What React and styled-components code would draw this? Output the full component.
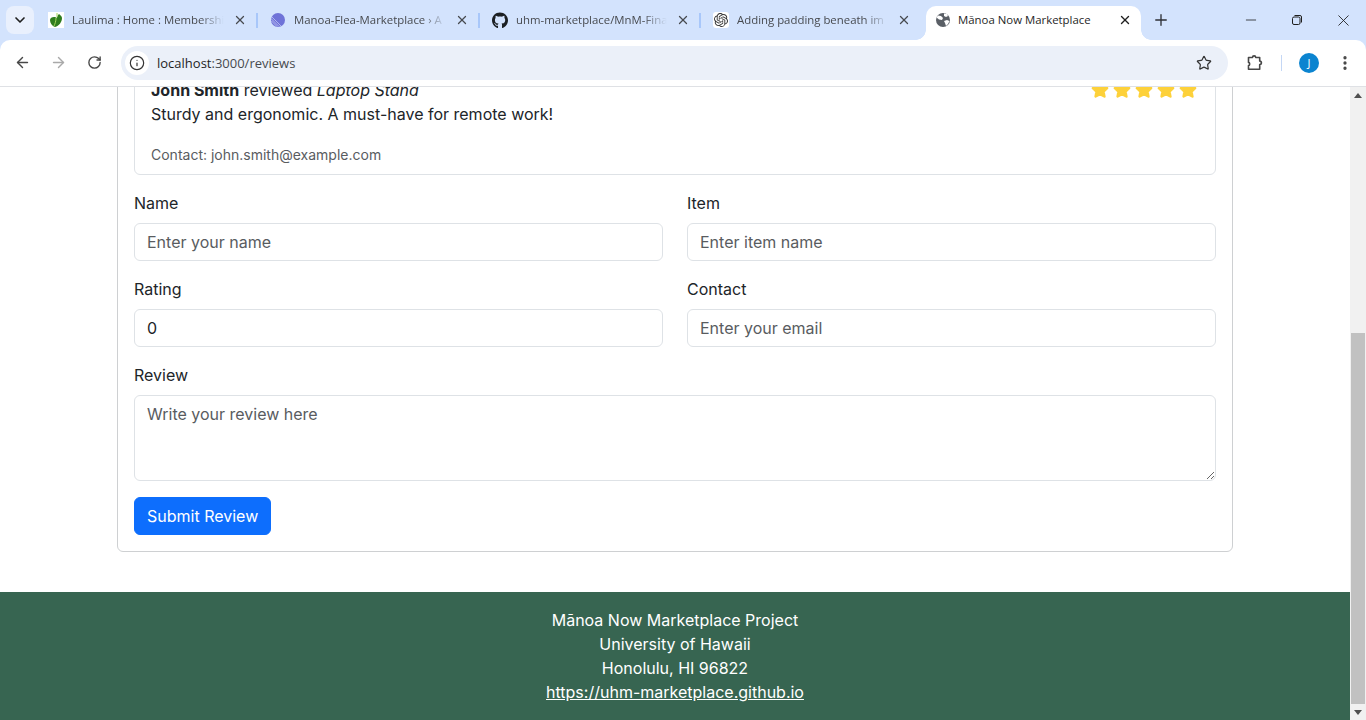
import React from "react"
import styled, { createGlobalStyle } from "styled-components"
import { ArrowLeft, ArrowRight, RotateCw, Star, X, Plus, Minus, ChevronDown, Info, EllipsisVertical } from "lucide-react"
import { FaGithub } from "react-icons/fa"
import { SiOpenai } from "react-icons/si"

const LeafIcon = () => (
  <svg width="16" height="16" viewBox="0 0 16 16">
    <rect width="16" height="16" fill="#fff" />
    <path d="M2 8c0-2 2-3 4-3 1 0 2 0 3 1 0-2 1-3 2-4 1 1 3 2 3 4 0 4-3 8-7 9-3-1-5-4-5-7z" fill="#2f7d1e" />
    <path d="M9 1v4M8 6c0 3-1 6-2 8" stroke="#a4d65e" strokeWidth="1" fill="none" />
  </svg>
)

const OrbIcon = () => (
  <svg width="16" height="16" viewBox="0 0 16 16">
    <circle cx="8" cy="8" r="7" fill="#6f73d8" />
    <path d="M1.5 9l5.5 5.5M1.5 7l7.5 7.5M2 5l9 9" stroke="#c3c6f2" strokeWidth="0.8" />
  </svg>
)

const GlobeIcon = () => (
  <svg width="16" height="16" viewBox="0 0 16 16">
    <circle cx="8" cy="8" r="7" fill="#5a5f66" />
    <path d="M3 3.5l3 .5 2 2-1 2-3-.5-2.5-2zM9 1.5l3 .5 1 2-2 1-2-1zM9 9l3-1 2.5 1-1.5 3-2 2-1-3z" fill="#fff" />
  </svg>
)

const ExtensionIcon = () => (
  <svg width="18" height="18" viewBox="0 0 18 18" fill="none" stroke="#474747" strokeWidth="1.6" strokeLinejoin="round">
    <path d="M2.5 3.5h4a1.6 1.6 0 0 1 3.2 0h4v3.6a1.6 1.6 0 0 1 0 3.4v4.7H2.5v-3.6c1.6 0 1.6-3 0-3.2z" />
  </svg>
)

const RestoreIcon = () => (
  <svg width="12" height="12" viewBox="0 0 12 12" fill="none" stroke="#1f1f1f" strokeWidth="1">
    <rect x="1.5" y="3" width="7.5" height="7.5" rx="1.5" />
    <path d="M3.5 1.5h5.5a1.5 1.5 0 0 1 1.5 1.5v5.5" />
  </svg>
)

const ReviewStar = () => (
  <svg width="18" height="18" viewBox="0 0 24 24" fill="#fdd13a" stroke="#fdd13a" strokeWidth="3.2" strokeLinejoin="round">
    <path d="M12 2.5l2.9 6.1 6.6.9-4.8 4.6 1.2 6.6L12 17.5l-5.9 3.2 1.2-6.6-4.8-4.6 6.6-.9z" />
  </svg>
)

const App = () => {
  const chromeTabs = [
    { title: "Laulima : Home : Membershi", icon: <LeafIcon />, width: 222 },
    { title: "Manoa-Flea-Marketplace › A", icon: <OrbIcon />, width: 222 },
    { title: "uhm-marketplace/MnM-Fina", icon: <FaGithub size={17} color="#1b1f23" />, width: 221 },
    {
      title: "Adding padding beneath im",
      icon: (
        <WhiteChip>
          <SiOpenai size={14} color="#333" />
        </WhiteChip>
      ),
      width: 221,
    },
  ]

  return (
    <Window>
      <GlobalStyle />
      <TabStrip>
        <TabSearch>
          <ChevronDown size={16} strokeWidth={2.5} />
        </TabSearch>
        {chromeTabs.map((tab, i) => (
          <Tab key={tab.title} $width={tab.width} $divider={i < 3}>
            <Favicon>{tab.icon}</Favicon>
            <TabTitle>{tab.title}</TabTitle>
            <TabClose>
              <X size={14} strokeWidth={2.2} />
            </TabClose>
          </Tab>
        ))}
        <ActiveTab>
          <Favicon>
            <GlobeIcon />
          </Favicon>
          <ActiveTitle>Mānoa Now Marketplace</ActiveTitle>
          <TabClose>
            <X size={14} strokeWidth={2.4} color="#1f1f1f" />
          </TabClose>
        </ActiveTab>
        <NewTab>
          <Plus size={18} strokeWidth={1.8} />
        </NewTab>
        <WindowControls>
          <WindowButton>
            <Minus size={16} strokeWidth={1.2} />
          </WindowButton>
          <WindowButton>
            <RestoreIcon />
          </WindowButton>
          <WindowButton>
            <X size={19} strokeWidth={1.1} />
          </WindowButton>
        </WindowControls>
      </TabStrip>

      <Toolbar>
        <NavButton>
          <ArrowLeft size={17} strokeWidth={2} color="#474747" />
        </NavButton>
        <NavButton>
          <ArrowRight size={17} strokeWidth={2} color="#a9a9a9" />
        </NavButton>
        <NavButton>
          <RotateCw size={15} strokeWidth={2.2} color="#474747" />
        </NavButton>
        <Omnibox>
          <SiteInfo>
            <Info size={16} strokeWidth={1.8} color="#333" />
          </SiteInfo>
          <Url>
            localhost<UrlPath>:3000/reviews</UrlPath>
          </Url>
          <Star size={16} strokeWidth={1.8} color="#333" />
        </Omnibox>
        <ToolbarEnd>
          <ExtensionIcon />
          <ToolbarDivider />
          <Avatar>J</Avatar>
          <EllipsisVertical size={18} strokeWidth={2.4} color="#474747" />
        </ToolbarEnd>
      </Toolbar>

      <Viewport>
        <Page>
          <Main>
            <FormCard>
              <ReviewCard>
                <ReviewHead>
                  <div>
                    <strong>John Smith</strong> reviewed <em>Laptop Stand</em>
                  </div>
                  <Stars>
                    {[1, 2, 3, 4, 5].map((n) => (
                      <ReviewStar key={n} />
                    ))}
                  </Stars>
                </ReviewHead>
                <ReviewText>Sturdy and ergonomic. A must-have for remote work!</ReviewText>
                <ReviewContact>Contact: john.smith@example.com</ReviewContact>
              </ReviewCard>
              <FieldGrid>
                <Field>
                  <Label>Name</Label>
                  <Input placeholder="Enter your name" />
                </Field>
                <Field>
                  <Label>Item</Label>
                  <Input placeholder="Enter item name" />
                </Field>
                <Field>
                  <Label>Rating</Label>
                  <Input defaultValue="0" />
                </Field>
                <Field>
                  <Label>Contact</Label>
                  <Input placeholder="Enter your email" />
                </Field>
              </FieldGrid>
              <Field>
                <Label>Review</Label>
                <TextArea placeholder="Write your review here" />
              </Field>
              <SubmitButton>Submit Review</SubmitButton>
            </FormCard>
          </Main>
          <Footer>
            <div>Mānoa Now Marketplace Project</div>
            <div>University of Hawaii</div>
            <div>Honolulu, HI 96822</div>
            <FooterLink href="#">https://uhm-marketplace.github.io</FooterLink>
          </Footer>
        </Page>
        <ScrollBar>
          <ScrollUp />
          <ScrollThumb />
          <ScrollDown />
        </ScrollBar>
      </Viewport>
    </Window>
  )
}

export default App

const GlobalStyle = createGlobalStyle`
  html, body {
    margin: 0;
    height: 100%;
    overflow: hidden;
  }
  * {
    box-sizing: border-box;
  }
  body {
    font-family: Inter, "Liberation Sans", sans-serif;
    font-size: 16px;
    line-height: 24px;
    color: #212529;
    background: #fff;
  }
`

const ChromeFont = `"Open Sans", "Liberation Sans", sans-serif`

const Window = styled.div`
  display: flex;
  flex-direction: column;
  height: 720px;
  width: 1366px;
  overflow: hidden;
  background: #d3e3fd;
`

const TabStrip = styled.div`
  display: flex;
  align-items: flex-end;
  flex: none;
  height: 40px;
  padding-left: 36px;
  background: #d3e3fd;
  position: relative;
`

const TabSearch = styled.div`
  position: absolute;
  left: 6px;
  top: 6px;
  width: 28px;
  height: 28px;
  border-radius: 8px;
  background: #e9f0fd;
  display: flex;
  align-items: center;
  justify-content: center;
  color: #1f1f1f;
`

const Tab = styled.div`
  display: flex;
  align-items: center;
  width: ${(p) => p.$width}px;
  height: 40px;
  padding: 0 10px 0 12px;
  position: relative;
  &::after {
    content: "";
    display: ${(p) => (p.$divider ? "block" : "none")};
    position: absolute;
    right: 0;
    top: 13px;
    width: 2px;
    height: 15px;
    background: #a8c7fa;
  }
`

const ActiveTab = styled.div`
  display: flex;
  align-items: center;
  position: relative;
  width: 215px;
  height: 34px;
  margin-left: 4px;
  padding: 0 8px 6px 9px;
  background: #fff;
  border-radius: 10px 10px 0 0;
  &::before,
  &::after {
    content: "";
    position: absolute;
    bottom: 0;
    width: 10px;
    height: 10px;
  }
  &::before {
    left: -10px;
    background: radial-gradient(circle at 0 0, transparent 9.5px, #fff 10px);
  }
  &::after {
    right: -10px;
    background: radial-gradient(circle at 100% 0, transparent 9.5px, #fff 10px);
  }
`

const Favicon = styled.span`
  display: flex;
  align-items: center;
  justify-content: center;
  flex: none;
  width: 16px;
  height: 16px;
`

const WhiteChip = styled.span`
  display: flex;
  align-items: center;
  justify-content: center;
  width: 16px;
  height: 16px;
  border-radius: 3px;
  background: #fff;
`

const TabTitle = styled.span`
  flex: 1;
  min-width: 0;
  margin-left: 8px;
  font-family: ${ChromeFont};
  font-size: 11.4px;
  line-height: 16px;
  color: #474a4f;
  white-space: nowrap;
  -webkit-mask-image: linear-gradient(to right, #000 84%, transparent 100%);
  mask-image: linear-gradient(to right, #000 84%, transparent 100%);
`

const ActiveTitle = styled(TabTitle)`
  margin-left: 7px;
  color: #1f1f1f;
  -webkit-mask-image: none;
  mask-image: none;
`

const TabClose = styled.span`
  display: flex;
  align-items: center;
  justify-content: center;
  flex: none;
  width: 16px;
  height: 16px;
  margin-left: 8px;
  color: #474a4f;
`

const NewTab = styled.div`
  display: flex;
  align-items: center;
  justify-content: center;
  width: 28px;
  height: 28px;
  margin: 0 0 6px 6px;
  color: #2f3136;
`

const WindowControls = styled.div`
  display: flex;
  margin-left: auto;
  align-self: stretch;
`

const WindowButton = styled.div`
  display: flex;
  align-items: center;
  justify-content: center;
  width: 46px;
  color: #1f1f1f;
`

const Toolbar = styled.div`
  display: flex;
  align-items: center;
  flex: none;
  height: 47px;
  padding: 0 0 1px 6px;
  background: #fff;
  border-radius: 10px 10px 0 0;
  border-bottom: 1px solid #dfe1e5;
`

const NavButton = styled.div`
  display: flex;
  align-items: center;
  justify-content: center;
  flex: none;
  width: 32px;
  height: 32px;
  margin-right: 4px;
`

const Omnibox = styled.div`
  display: flex;
  align-items: center;
  flex: none;
  width: 1107px;
  height: 34px;
  margin-left: 7px;
  padding: 0 16px 0 4px;
  border-radius: 17px;
  background: #ebf0f9;
`

const SiteInfo = styled.span`
  display: flex;
  align-items: center;
  justify-content: center;
  width: 24px;
  height: 24px;
  border-radius: 50%;
  background: #fff;
`

const Url = styled.span`
  flex: 1;
  margin-left: 8px;
  font-family: ${ChromeFont};
  font-size: 13px;
  line-height: 18px;
  color: #1f1f1f;
`

const UrlPath = styled.span`
  color: #474a4f;
`

const ToolbarEnd = styled.div`
  display: flex;
  align-items: center;
  flex: 1;
  padding-left: 18px;
`

const ToolbarDivider = styled.span`
  width: 1px;
  height: 16px;
  margin: 0 17px;
  background: #c4d7f5;
`

const Avatar = styled.span`
  display: flex;
  align-items: center;
  justify-content: center;
  flex: none;
  width: 20px;
  height: 20px;
  margin-right: 17px;
  border-radius: 50%;
  background: #0b84d0;
  color: #fff;
  font-family: ${ChromeFont};
  font-size: 11px;
`

const Viewport = styled.div`
  display: flex;
  flex: 1;
  min-height: 0;
  overflow: hidden;
  background: #fff;
`

const Page = styled.div`
  display: flex;
  flex-direction: column;
  justify-content: flex-end;
  flex: 1;
  min-width: 0;
  overflow: hidden;
`

const Main = styled.main`
  flex: none;
  padding: 0 117px 40px;
`

const FormCard = styled.section`
  display: flex;
  flex-direction: column;
  align-items: stretch;
  padding: 16px;
  border: 1px solid #ced0d2;
  border-radius: 6px;
`

const ReviewCard = styled.div`
  display: flex;
  flex-direction: column;
  padding: 16px 16px 6px;
  margin-bottom: 16px;
  border: 1px solid #dee2e6;
  border-radius: 6px;
`

const ReviewHead = styled.div`
  display: flex;
  justify-content: space-between;
  align-items: flex-start;
  strong {
    font-weight: 700;
  }
`

const Stars = styled.div`
  display: flex;
  gap: 4px;
  margin: 3px 2px 0 0;
`

const ReviewText = styled.p`
  margin: 0 0 16px;
`

const ReviewContact = styled.small`
  font-size: 14px;
  line-height: 26px;
  color: #595c5f;
`

const FieldGrid = styled.div`
  display: grid;
  grid-template-columns: 1fr 1fr;
  column-gap: 24px;
`

const Field = styled.div`
  display: flex;
  flex-direction: column;
  margin-bottom: 16px;
`

const Label = styled.label`
  margin-bottom: 8px;
`

const Input = styled.input`
  display: block;
  width: 100%;
  height: 38px;
  padding: 6px 12px;
  font: inherit;
  color: #212529;
  background: #fff;
  border: 1px solid #dee2e6;
  border-radius: 6px;
  outline: none;
  &::placeholder {
    color: #595c5f;
    opacity: 1;
  }
`

const TextArea = styled.textarea`
  display: block;
  width: 100%;
  height: 86px;
  padding: 6px 12px;
  font: inherit;
  color: #212529;
  background: #fff;
  border: 1px solid #dee2e6;
  border-radius: 6px;
  outline: none;
  resize: vertical;
  &::placeholder {
    color: #595c5f;
    opacity: 1;
  }
`

const SubmitButton = styled.button`
  align-self: flex-start;
  height: 38px;
  padding: 6px 12px;
  font: inherit;
  color: #fff;
  background: #0d6efd;
  border: 1px solid #0d6efd;
  border-radius: 6px;
`

const Footer = styled.footer`
  flex: none;
  height: 128px;
  padding-top: 16px;
  text-align: center;
  color: #fff;
  background: #376551;
`

const FooterLink = styled.a`
  color: #fff;
  text-decoration: underline;
`

const ScrollBar = styled.div`
  display: flex;
  flex-direction: column;
  flex: none;
  width: 16px;
  background: #f1f1f1;
`

const ScrollUp = styled.div`
  flex: none;
  height: 17px;
  position: relative;
  &::after {
    content: "";
    position: absolute;
    left: 4px;
    top: 6px;
    border: 4px solid transparent;
    border-top: 0;
    border-bottom: 5px solid #505050;
  }
`

const ScrollThumb = styled.div`
  flex: none;
  height: 371px;
  margin: 229px 1px 0;
  background: #c1c1c1;
`

const ScrollDown = styled.div`
  flex: 1;
  position: relative;
  &::after {
    content: "";
    position: absolute;
    left: 4px;
    bottom: 5px;
    border: 4px solid transparent;
    border-bottom: 0;
    border-top: 5px solid #505050;
  }
`
